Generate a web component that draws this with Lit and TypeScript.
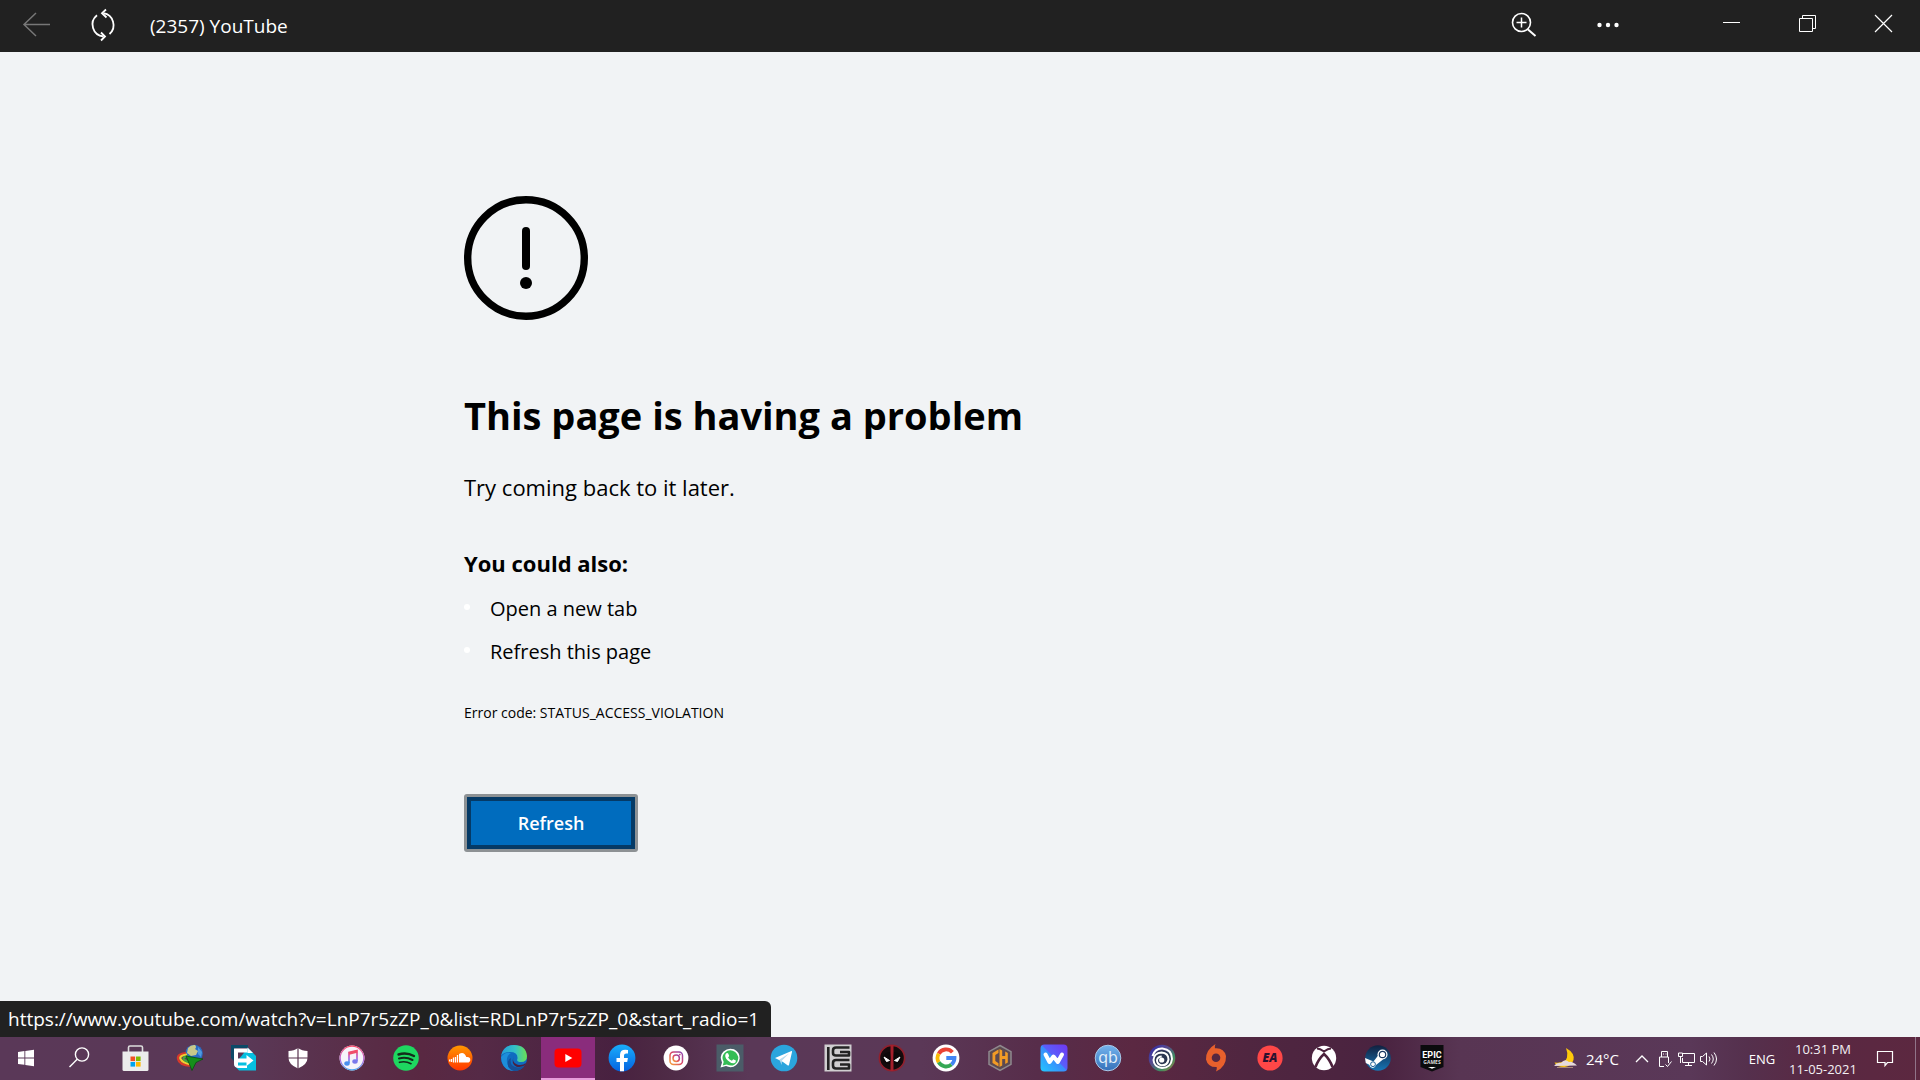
import { LitElement, html, svg, css } from "lit";
import type { SVGTemplateResult } from "lit";
import { customElement } from "lit/decorators.js";
import { classMap } from "lit/directives/class-map.js";

interface TaskItem {
  name: string;
  art: SVGTemplateResult;
  active?: boolean;
}

const line = (d: string, width = 1) =>
  svg`<path d=${d} fill="none" stroke="currentColor" stroke-width=${width} />`;

/* Taskbar artwork, each on a 28 x 28 grid. */
const tasks: TaskItem[] = [
  {
    name: "Start",
    art: svg`<path fill="#fff" d="M4 8l6.4-.9v6.4H4zM11.3 7l8.7-1.2v7.7h-8.7zM4 14.4h6.4v6.4L4 20zM11.3 14.4H20v7.8L11.3 21z"/>`,
  },
  {
    name: "Search",
    art: svg`<g fill="none" stroke="#fff" stroke-width="1.4"><circle cx="14" cy="10.5" r="6.6"/><path d="M9.2 15.2L1.5 23"/></g>`,
  },
  {
    name: "Microsoft Store",
    art: svg`<path d="M6.500 8V3.5Q6.500 2 8 2h11Q20.500 2 20.500 3.500V8" fill="none" stroke="#ddd" stroke-width="1.6"/>
      <path d="M.5 7.500h26v18q0 1.500-1.500 1.500H2Q.5 27 .5 25.500z" fill="#ececec"/>
      <path fill="#f25022" d="M8.500 12.500h4.600v4.600H8.500z"/><path fill="#7fba00" d="M14 12.500h4.600v4.600H14z"/>
      <path fill="#00a4ef" d="M8.500 18h4.600v4.600H8.500z"/><path fill="#ffb900" d="M14 18h4.600v4.600H14z"/>`,
  },
  {
    name: "Internet Download Manager",
    art: svg`<circle cx="18" cy="9.500" r="8.800" fill="#2a6cc4"/>
      <path d="M12 4q3-3.500 7-3 2 2 0 4l3 2-2 4-5 1-4-3z" fill="#c9c98a"/><path d="M22 3l4 5-1 5-3-3z" fill="#4f9ae0"/>
      <g fill="none" stroke-width="2.200"><path d="M10 9Q1 10 2 15q1 6 13 7" stroke="#d83a2a"/><path d="M11 10.500q-8 1-6.500 4.500 2 4 11 5.500" stroke="#f4cf30"/><path d="M12 12q-6 1-4 3.500 3 3 8 3" stroke="#43a83c"/></g>
      <path d="M10 12l17 3-7 3.500-4 8z" fill="#148f1a" stroke="#0b4b12" stroke-width=".8"/>`,
  },
  {
    name: "PC Manager",
    art: svg`<path d="M1 1h17v3H5v14l-4-4z" fill="#0c4a68"/><path d="M18 4l8 8v14.500H9L4 21z" fill="#05bfe0"/>
      <path d="M4 4.500h13.500v4H8v13h9v2.500H8q-4-.5-4-4z" fill="#fff"/><path d="M17.500 3.500L23 9h-5.500z" fill="#fff"/>
      <path d="M7 14.500h9.500V11l7 5.500-7 5.500v-3.500H7z" fill="#fff"/>`,
  },
  {
    name: "Windows Security",
    art: svg`<path d="M14 4q4 3 9.500 3v7q0 6.500-9.500 10.500Q4.500 20.500 4.500 14V7Q10 7 14 4z" fill="#fff"/><path d="M14 4v21M4 14h20" stroke="#5a3550" stroke-width="1.200"/>`,
  },
  {
    name: "iTunes",
    art: svg`<circle cx="14" cy="14" r="12.500" fill="#f6f4fa"/><circle cx="14" cy="14" r="11.800" fill="none" stroke="url(#itunes)" stroke-width="1.200"/>
      <path d="M11 19V8.500l8-2V17" fill="none" stroke="url(#itunes)" stroke-width="1.700"/><path d="M11 9.500l8-2" stroke="#f0506a" stroke-width="2.500"/><ellipse cx="9" cy="19.500" rx="2.700" ry="2.200" fill="#4a90ee"/><ellipse cx="17" cy="17.500" rx="2.700" ry="2.200" fill="#7a78ec"/>
      <defs><linearGradient id="itunes" x2="0" y2="1"><stop stop-color="#fa4868"/><stop offset=".6" stop-color="#b065df"/><stop offset="1" stop-color="#48a8f2"/></linearGradient></defs>`,
  },
  {
    name: "Spotify",
    art: svg`<circle cx="14" cy="14" r="12.800" fill="#1ed760"/><g fill="none" stroke="#142b1b" stroke-linecap="round"><path d="M6.500 10.500q8-2.500 15.500 1.500" stroke-width="2.400"/><path d="M7 14.500q7-2 13.500 1.500" stroke-width="2"/><path d="M7.500 18.300q6-1.600 11.500 1.400" stroke-width="1.700"/></g>`,
  },
  {
    name: "SoundCloud",
    art: svg`<defs><linearGradient id="cloud" x2="0" y2="1"><stop stop-color="#ff9800"/><stop offset="1" stop-color="#ff3600"/></linearGradient></defs><circle cx="14" cy="14" r="12.500" fill="url(#cloud)"/>
      <path d="M13 18.500V10q5-3 7.300 3 4-.5 4 2.700 0 2.800-3 2.800z" fill="#fff"/><path d="M11.500 18.500V11M9.500 18.500V13M7.500 18.500v-5M5.500 18v-3M3.700 17.500v-2" stroke="#fff" stroke-width="1.300"/>`,
  },
  {
    name: "Microsoft Edge",
    art: svg`<defs><linearGradient id="wave" x1="0" x2="1"><stop stop-color="#249cdc"/><stop offset=".55" stop-color="#35c1c5"/><stop offset="1" stop-color="#6be052"/></linearGradient></defs>
      <circle cx="14" cy="14" r="13" fill="#0f6bc0"/><path d="M1 12Q3 1 14 1q12 0 13 11 0 6-6 6-5 0-3.500-3.500Q18 8 10 8 3 8 1 12z" fill="url(#wave)"/>
      <path d="M1 13Q5 7.500 11 9q-5 3-4 9 1 6 7 9Q2 27 1 13z" fill="#1d8edb"/><path d="M11 14q-2 9 6.500 9.500 5 .3 7.500-2.500-3.500 6-11 6-8-3-6-9.500 1-3 3-3.500z" fill="#164f97"/>
      <path d="M14 12q-3 6 3 8.500 5 1.500 9-1.500l-1 2.200q-4 2.500-8.500 1.500Q10.500 20 14 12z" fill="#4a2140"/>`,
  },
  {
    name: "YouTube",
    active: true,
    art: svg`<rect x="0.500" y="4.500" width="27" height="19" rx="4" fill="#f00"/><path d="M11.300 10l7 4-7 4z" fill="#fff"/>`,
  },
  {
    name: "Facebook",
    art: svg`<defs><linearGradient id="fb" x2="0" y2="1"><stop stop-color="#19adfb"/><stop offset="1" stop-color="#0563e0"/></linearGradient></defs><circle cx="14" cy="14" r="13.400" fill="url(#fb)"/>
      <path d="M12 27.300V18H8.500v-4H12v-3q0-5.300 5.300-5.300 1.500 0 2.700.3v3.400h-1.800Q16 9.400 16 11.400V14h3.900l-.7 4H16v9.300z" fill="#fff"/>`,
  },
  {
    name: "Instagram",
    art: svg`<defs><linearGradient id="ig" x1="0" y1="1" x2="1" y2="0"><stop stop-color="#f5a63c"/><stop offset=".5" stop-color="#dd4560"/><stop offset="1" stop-color="#8849b8"/></linearGradient></defs>
      <circle cx="14" cy="14" r="12.400" fill="#fff"/><g fill="none" stroke="url(#ig)" stroke-width="1.500"><rect x="8" y="8" width="12.500" height="12.500" rx="3.500"/><circle cx="14.200" cy="14.200" r="3.200"/></g><circle cx="17.800" cy="10.600" r=".9" fill="#c04585"/>`,
  },
  {
    name: "WhatsApp",
    art: svg`<path fill="#4b5c68" d="M.5.5h27v27H.5z"/><path d="M4.500 23.500L6 18.600Q3 12 7.500 7.500 12 3.300 18 5.300q6 3 5.700 9-.7 6-6.200 8.500-4 1-7.500-.7z" fill="#fff"/>
      <path d="M6.700 21.400l1-3.500q-3-5 1-9.200 5-4.500 10.500-.8 5 4.500 2 10-4 5.600-10.500 2.500z" fill="#35bd56"/><path d="M10 9.500q1.500-1 2.300.3l.8 2q0 .7-1 1.700 1.200 2.300 3.800 3.300l1.300-1.500 2.700 1.300q.3 2-1.800 2.700-3 .5-6.300-2.700-4-4-1.800-7.100z" fill="#fff"/>`,
  },
  {
    name: "Telegram",
    art: svg`<circle cx="14" cy="14" r="13.300" fill="#2ba5dd"/><path d="M5 14L21.500 7q.8-.2.500 1l-3 13q-.4 1-1.500.3L13 18z" fill="#fff"/><path d="M9.500 15.500L19 9.500l-7 7-.5 4.500z" fill="#b9dcee"/>`,
  },
  {
    name: "IGG Games",
    art: svg`<path fill="#d0ced0" d="M.5.500h27v27H.5z"/><path d="M4.300 3v23" stroke="#232323" stroke-width="2.600"/>
      <g fill="none" stroke="#232323" stroke-width="2.600" stroke-linejoin="round"><path d="M25.500 3.500H12q-3 0-3 3v2.500q0 2.500 3 2.500h13V8h-9"/><path d="M25.500 16H12q-3 0-3 3v2.500q0 3 3 3h13V20.500h-9"/></g>`,
  },
  {
    name: "Deadpool",
    art: svg`<circle cx="14" cy="14" r="12.600" fill="#140b0d" stroke="#92202d" stroke-width="1.600"/><path d="M12.500 1h3v26h-3z" fill="#a51f2b"/>
      <path d="M12 8q1 6 0 12-7 0-7.500-6Q6 8 12 8zM16 8q-1 6 0 12 7 0 7.500-6Q22 8 16 8z" fill="#0d0809"/><path d="M6 13l5.500 3.500-3 1zM22 13l-5.500 3.500 3 1z" fill="#fff" stroke="#fff"/>`,
  },
  {
    name: "Google",
    art: svg`<circle cx="14" cy="14" r="13.400" fill="#fff"/><g fill="none" stroke-width="3.800"><path d="M20.400 8.300A8.500 8.500 0 0 0 6.700 9.700" stroke="#ea4335"/><path d="M6.700 9.700a8.500 8.500 0 0 0 0 8.600" stroke="#fbbc05"/><path d="M6.700 18.300a8.500 8.500 0 0 0 12.800 2.200" stroke="#34a853"/><path d="M19.500 20.500a8.500 8.500 0 0 0 3-6.500H14.300" stroke="#4285f4"/></g>`,
  },
  {
    name: "Hex launcher",
    art: svg`<path d="M14 1.500l11 6.200v12.600L14 26.500 3 20.300V7.700z" fill="#5d4a50" stroke="#8f898e" stroke-width="1.500"/>
      <path d="M12.500 5.500L6.500 9v10l6 3.500v-3.300L9.300 17v-6l3.200-2zM13.500 5v18l2.700-1.500V15h3v5l2.600-1.500V9l-2.600-1.500V12h-3V6.500z" fill="#f29b25"/>`,
  },
  {
    name: "Wallpaper app",
    art: svg`<defs><linearGradient id="wall" x1="0" y1="1" x2="1" y2="0"><stop stop-color="#22c8ff"/><stop offset=".5" stop-color="#3a8bfc"/><stop offset=".52" stop-color="#5960fb"/><stop offset="1" stop-color="#7136f2"/></linearGradient></defs><rect x=".5" y=".5" width="27" height="27" rx="4" fill="url(#wall)"/>
      <path d="M5.500 10.500l4 7.500 4-5.500 4.300 5.500 4.200-7.500" fill="none" stroke="#fff" stroke-width="4" stroke-linejoin="round" stroke-linecap="round"/>`,
  },
  {
    name: "qBittorrent",
    art: svg`<defs><linearGradient id="qb" x2="0" y2="1"><stop stop-color="#74b4ee"/><stop offset="1" stop-color="#3570b9"/></linearGradient></defs><circle cx="14" cy="14" r="12.800" fill="url(#qb)" stroke="#a9c9e9"/>
      <text x="14" y="19" text-anchor="middle" font-family="Open Sans, sans-serif" font-size="16" fill="#e6f1fb">qb</text>`,
  },
  {
    name: "Ubisoft Connect",
    art: svg`<defs><linearGradient id="ubi" x1="0" y1="0" x2="1" y2="1"><stop stop-color="#2a28b0"/><stop offset=".4" stop-color="#574a8d"/><stop offset=".7" stop-color="#3f8d62"/><stop offset="1" stop-color="#a87b3c"/></linearGradient></defs><circle cx="14" cy="14" r="13.300" fill="url(#ubi)"/><circle cx="14" cy="15" r="9" fill="#2a3550"/>
      <g fill="none" stroke="#fff"><path d="M4.500 12Q7 4 14.500 4.500 24 5.500 24 15q-1 9-10 9-8-1-8.500-8Q6 9 13.500 8.500q7 .5 7 7-1 6-7 5.700-4.500-1-4.500-5 .7-3.700 4.700-3.700" stroke-width="2"/></g><circle cx="13.700" cy="16" r="2.600" fill="#fff"/>`,
  },
  {
    name: "Origin",
    art: svg`<path d="M13.500 0q-1 2-.6 4.300 9-.8 11.100 7.700.5 10.500-10 15.500 1.200-2.200.7-4.400Q6 23.500 4 15.500 3.500 6 13.500 0z" fill="#e8602c"/><circle cx="14" cy="13.800" r="4.300" fill="#572840"/>`,
  },
  {
    name: "EA Desktop",
    art: svg`<circle cx="14" cy="14" r="12.600" fill="#ff4747"/><text x="14" y="18" text-anchor="middle" font-family="Open Sans, sans-serif" font-size="12" font-weight="800" font-style="italic" fill="#2b1230">EA</text>`,
  },
  {
    name: "Xbox",
    art: svg`<circle cx="14" cy="14" r="12.200" fill="#fff"/>
      <g fill="none" stroke="#4d223d"><path d="M7 4.500Q10 4.500 14 7.500 18 4.500 21 4.500" stroke-width="2"/><path d="M5.500 23Q8.500 15 14 10 19.500 15 22.500 23" stroke-width="2.600"/></g>`,
  },
  {
    name: "Steam",
    art: svg`<defs><linearGradient id="steam" x2="0" y2="1"><stop stop-color="#12203f"/><stop offset="1" stop-color="#1776b5"/></linearGradient></defs><circle cx="14" cy="14" r="12.800" fill="url(#steam)"/>
      <path d="M1 14l8.500 3.600 5-6.600 4.500 4.500-7 5.500q-1 3.500-4 2.800-2.300-.7-2.700-3L1.800 19z" fill="#fff"/><circle cx="18.500" cy="10.500" r="5" fill="#fff"/><circle cx="18.500" cy="10.500" r="3.200" fill="#fff" stroke="#18375f" stroke-width="1.200"/><circle cx="9" cy="20.200" r="2.400" fill="none" stroke="#1a6099"/>`,
  },
  {
    name: "Epic Games",
    art: svg`<path d="M2.500 1h23v22L14 27.500 2.500 23z" fill="#0b0b0d"/><text x="14" y="14" text-anchor="middle" font-family="Roboto, sans-serif" font-size="9" font-weight="700" fill="#fff">EPIC</text>
      <text x="14" y="20" text-anchor="middle" font-family="Open Sans, sans-serif" font-size="5" font-weight="700" fill="#ddd">GAMES</text><path d="M10 23h8l-4 1.800z" fill="#fff"/>`,
  },
];

@customElement("app-titlebar")
export class AppTitlebar extends LitElement {
  static styles = css`
    :host {
      display: flex;
      align-items: stretch;
      height: 52px;
      background: #212121;
      color: #fff;
    }
    button {
      display: grid;
      place-items: center;
      padding: 0;
      border: 0;
      background: none;
      color: inherit;
    }
    svg {
      display: block;
      width: 36px;
      height: 36px;
    }
    .back {
      width: 72px;
      color: #777;
    }
    .reload {
      width: 62px;
    }
    .title {
      margin: 0 auto 0 16px;
      font-size: 19px;
      font-weight: 400;
      line-height: 52px;
    }
    .tools {
      display: flex;
      margin-right: 42px;
    }
    .tools button {
      width: 84px;
    }
    .windows {
      display: flex;
    }
    .windows button {
      width: 76px;
    }
  `;

  render() {
    return html`
      <button class="back" aria-label="Back" disabled>
        <svg viewBox="0 0 36 36">${line("M32 16.500H6M18 5L6 16.500 18 28", 1.5)}</svg>
      </button>
      <button class="reload" aria-label="Reload">
        <svg viewBox="0 0 36 36">
          ${line("M12 7.200A12 12 0 0 0 18.500 28.500M24.500 26A12 12 0 0 0 18.500 5.200", 1.8)}
          ${line("M16 24.500l4 4-4 4M21.500 9.500L17 5.200 21 1.500", 1.8)}
        </svg>
      </button>
      <h1 class="title">(2357) YouTube</h1>
      <div class="tools">
        <button aria-label="Zoom">
          <svg viewBox="0 0 36 36">
            <circle cx="15.500" cy="14.500" r="9" fill="none" stroke="currentColor" stroke-width="1.600" />
            ${line("M22 21.500l7.500 6.500", 2)}${line("M15.500 9.500v10M10.500 14.500h10", 1.5)}
          </svg>
        </button>
        <button aria-label="More">
          <svg viewBox="0 0 36 36" fill="currentColor">
            <circle cx="9.500" cy="17" r="2.200" /><circle cx="18" cy="17" r="2.200" /><circle cx="26.500" cy="17" r="2.200" />
          </svg>
        </button>
      </div>
      <div class="windows">
        <button aria-label="Minimize"><svg viewBox="0 0 36 36">${line("M11 14.500h17")}</svg></button>
        <button aria-label="Restore">
          <svg viewBox="0 0 36 36">${line("M11.500 10.500h13v13h-13zM14.500 10.500v-3h13v13h-3")}</svg>
        </button>
        <button aria-label="Close"><svg viewBox="0 0 36 36">${line("M11 7l17 17M28 7L11 24", 1.2)}</svg></button>
      </div>
    `;
  }
}

@customElement("app-error-page")
export class AppErrorPage extends LitElement {
  static styles = css`
    :host {
      display: block;
      color: #000;
    }
    .content {
      max-width: 992px;
      margin: 0 auto;
      padding: 144px 0 0;
    }
    .alert {
      display: block;
      width: 124px;
      height: 124px;
      margin-bottom: 68px;
    }
    h2 {
      margin: 0 0 29px;
      font-size: 38px;
      font-weight: 700;
      line-height: 54px;
    }
    p {
      margin: 0;
    }
    .lead {
      margin-bottom: 44px;
      font-size: 22px;
      line-height: 32px;
    }
    h3 {
      margin: 0 0 14px;
      font-size: 22px;
      font-weight: 700;
      line-height: 32px;
    }
    ul {
      display: grid;
      gap: 11px;
      margin: 0 0 33px;
      padding: 0;
      list-style: none;
    }
    li {
      display: flex;
      align-items: center;
      gap: 20px;
      font-size: 20px;
      line-height: 32px;
    }
    li::before {
      content: "";
      width: 6px;
      height: 6px;
      margin-bottom: 4px;
      border-radius: 50%;
      background: #fff;
    }
    .code {
      margin-bottom: 69px;
      font-size: 14px;
      line-height: 24px;
    }
    .refresh {
      display: block;
      width: 174px;
      height: 58px;
      padding: 0;
      border: 3px solid #8d9194;
      border-radius: 3px;
      background: #006cbe;
      box-shadow: inset 0 0 0 4px #053a66;
      color: #fff;
      font: 600 18px "Open Sans", "Noto Sans", sans-serif;
    }
  `;

  render() {
    return html`
      <div class="content">
        <svg class="alert" viewBox="0 0 124 124">
          <circle cx="62" cy="62" r="58.300" fill="none" stroke="#000" stroke-width="7.400" />
          <path d="M62 35v35" stroke="#000" stroke-width="8" stroke-linecap="round" />
          <circle cx="62" cy="87" r="6" />
        </svg>
        <h2>This page is having a problem</h2>
        <p class="lead">Try coming back to it later.</p>
        <h3>You could also:</h3>
        <ul>
          <li>Open a new tab</li>
          <li>Refresh this page</li>
        </ul>
        <p class="code">Error code: STATUS_ACCESS_VIOLATION</p>
        <button class="refresh">Refresh</button>
      </div>
    `;
  }
}

@customElement("app-taskbar")
export class AppTaskbar extends LitElement {
  static styles = css`
    :host {
      display: flex;
      justify-content: space-between;
      height: 43px;
      background: linear-gradient(
        90deg,
        #5a3858 0%,
        #5a3856 13%,
        #592d47 19%,
        #592842 22%,
        #552a46 25%,
        #482140 32%,
        #4c2843 34%,
        #5a3857 39%,
        #5b3857 48%,
        #572d4a 54%,
        #5b2842 59%,
        #502640 65%,
        #4a2340 72%,
        #583553 76%,
        #5a3858 88%,
        #55304d 91%,
        #5a2842 95%,
        #5c2840 100%
      );
      color: #fff;
    }
    button {
      display: grid;
      place-items: center;
      padding: 0;
      border: 0;
      background: none;
      color: inherit;
      font: inherit;
    }
    svg {
      display: block;
    }
    .apps,
    .tray {
      display: flex;
    }
    .apps {
      padding-left: 1px;
    }
    .app {
      width: 54px;
      border-bottom: 2px solid transparent;
    }
    .app svg {
      width: 28px;
      height: 28px;
    }
    .active {
      background: #8a2c7c;
      border-bottom-color: #e79bdc;
    }
    .tray {
      font-size: 13px;
      line-height: 20px;
    }
    .weather {
      display: flex;
      align-items: center;
      gap: 8px;
      margin-right: 12px;
      font-size: 15px;
    }
    .status {
      width: 22px;
    }
    .language {
      margin: 0 6px 0 26px;
      width: 34px;
    }
    .clock {
      width: 76px;
      align-content: center;
      color: #f3eef2;
    }
    .notices {
      width: 48px;
    }
    .desktop {
      width: 5px;
      margin-left: 6px;
      border-left: 1px solid #917489;
    }
  `;

  render() {
    return html`
      <nav class="apps" aria-label="Applications">
        ${tasks.map(
          (task) => html`
            <button class=${classMap({ app: true, active: !!task.active })} aria-label=${task.name}>
              <svg viewBox="0 0 28 28">${task.art}</svg>
            </button>
          `,
        )}
      </nav>
      <div class="tray">
        <button class="weather">
          <svg width="26" height="22" viewBox="0 0 26 22">
            <path d="M14 0q9 5 7.500 12-2 6-9 7-8 0-10-4.500 11 1 12.500-5Q16 5 14 0z" fill="#ffc90a" />
            <path d="M2 18q3-4 7-3 4-5 8-1 3-1 8 3.500z" fill="#e5d9dc" />
            <path d="M5 19.500h16" stroke="#a98876" />
          </svg>
          24°C
        </button>
        <button class="status" aria-label="Hidden icons">
          <svg width="22" height="22" viewBox="0 0 22 22">${line("M5 14l6-6 6 6", 1.3)}</svg>
        </button>
        <button class="status" aria-label="USB device">
          <svg width="22" height="22" viewBox="0 0 22 22">
            ${line("M8.500 9V3.500h6V9M6.500 18.500V9h9v6M6.500 18.500H11M10 6h1M12.500 6h1")}${line("M12.500 16.500l2 2 4-5")}
          </svg>
        </button>
        <button class="status" aria-label="Network">
          <svg width="22" height="22" viewBox="0 0 22 22">
            ${line("M8 5.500h11.500v9H7.500V10M13.500 14.500v3M10 17.500h7M3.500 5v3.500h4V5zM5.500 8.500V15")}
          </svg>
        </button>
        <button class="status" aria-label="Volume">
          <svg width="22" height="22" viewBox="0 0 22 22">
            ${line("M3.500 8.500h2L9.500 5v12l-4-3.500h-2zM12 8.500q2 2.500 0 5M14.500 6.500q3.500 4.500 0 9M17 4.500q5 6.500 0 13")}
          </svg>
        </button>
        <button class="language">ENG</button>
        <button class="clock"><span>10:31 PM</span><span>11-05-2021</span></button>
        <button class="notices" aria-label="Notifications">
          <svg width="22" height="22" viewBox="0 0 22 22">
            ${line("M3.500 3.500h15v11h-5l-2.500 3v-3H3.500z", 1.2)}
          </svg>
        </button>
        <button class="desktop" aria-label="Show desktop"></button>
      </div>
    `;
  }
}

@customElement("app-root")
export class AppRoot extends LitElement {
  static styles = css`
    :host {
      display: flex;
      flex-direction: column;
      min-height: 100vh;
      background: #f1f3f5;
      font-family: "Open Sans", "Noto Sans", sans-serif;
    }
    .page {
      position: relative;
      flex: 1;
    }
    .link-status {
      position: absolute;
      left: 0;
      bottom: 0;
      box-sizing: border-box;
      padding: 0 12px 0 8px;
      border-radius: 0 6px 0 0;
      background: #212121;
      color: #fff;
      font-size: 19px;
      line-height: 36px;
    }
  `;

  render() {
    return html`
      <app-titlebar></app-titlebar>
      <main class="page">
        <app-error-page></app-error-page>
        <div class="link-status">https://www.youtube.com/watch?v=LnP7r5zZP_0&amp;list=RDLnP7r5zZP_0&amp;start_radio=1</div>
      </main>
      <app-taskbar></app-taskbar>
    `;
  }
}
